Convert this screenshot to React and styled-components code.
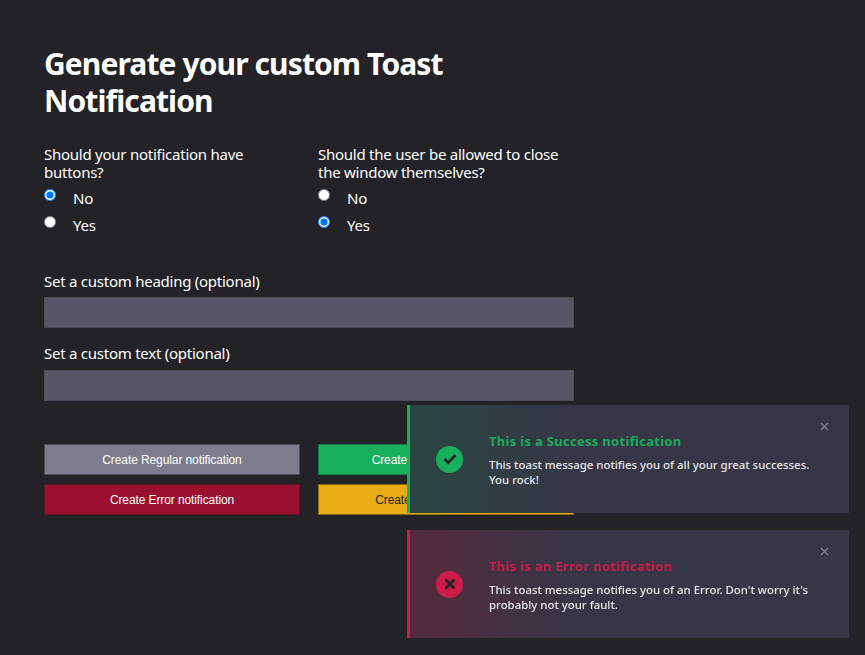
import React from "react";
import styled, { createGlobalStyle } from "styled-components";

const Global = createGlobalStyle`
  html, body { margin: 0; padding: 0; background: #222227; }
  body { font-family: "Noto Sans", "Open Sans", sans-serif; color: #fff; }
  * { box-sizing: border-box; }
`;
const Page = styled.main`
  width: 530px; margin-left: 44px; padding-top: 46px; height: 655px; overflow: hidden;
`;
const Title = styled.h1`
  margin: 0 0 26px; font-size: 30px; line-height: 36.5px; font-weight: 700; color: #fff; letter-spacing: -.9px;
`;
const Columns = styled.div`
  display: grid; grid-template-columns: 256px 256px; column-gap: 18px;
`;
const Group = styled.fieldset`
  border: 0; margin: 0; padding: 0; min-width: 0;
`;
const Question = styled.legend`
  padding: 0; margin: 0 0 2px; font-size: 15px; line-height: 18px; letter-spacing: -.25px; display: block;
`;
const Option = styled.label`
  display: flex; height: 27px; align-items: flex-start; font-size: 15px; line-height: 31px; letter-spacing: -.25px;
`;
const Radio = styled.input`
  width: 12px; height: 12px; margin: 6px 17px 0 0; flex: none;
`;
const Field = styled.div`
  display: flex; flex-direction: column; margin-top: ${p => p.$top}px;
`;
const FieldLabel = styled.label`
  font-size: 15px; line-height: 18px; letter-spacing: -.25px; margin-bottom: ${p => p.$gap}px;
`;
const Input = styled.input`
  height: 31px; width: 100%; background: #565666; border: 1px solid #4b4b59; color: #fff;
`;
const Buttons = styled.div`
  display: grid; grid-template-columns: 256px 256px; gap: 9px 18px; margin-top: 43px;
`;
const Button = styled.button`
  height: 31px; border: 1px solid ${p => p.$edge}; background: ${p => p.$bg}; color: ${p => p.$fg};
  font-family: "Liberation Sans", Arial, sans-serif; font-size: 12px; letter-spacing: -.1px;
  padding: 0 ${p => p.$padRight || 0}px 0 0;
`;
const ToastStack = styled.div`
  position: fixed; left: 407px; top: 405px; width: 442px; display: flex; flex-direction: column; gap: 17px;
`;
const Toast = styled.div`
  height: 108px; border-left: 3px solid ${p => p.$color}; background: linear-gradient(90deg, ${p => p.$tint} 0%, #363646 37%);
  display: flex; align-items: center; padding: 0 36px 0 26px; position: relative;
`;
const IconCircle = styled.div`
  width: 27px; height: 27px; border-radius: 50%; background: ${p => p.$color}; flex: none; display: flex; align-items: center; justify-content: center;
`;
const Body = styled.div`
  margin-left: 26px; margin-top: 1px;
`;
const ToastTitle = styled.div`
  color: ${p => p.$color}; font-size: 13px; line-height: 18px; font-weight: 700; letter-spacing: .3px; margin-bottom: 7px;
`;
const ToastText = styled.div`
  color: #e6e6ea; font-size: 11.4px; line-height: 15px; font-weight: 500;
`;
const Close = styled.svg`
  position: absolute; top: 17px; right: 20px; width: 9px; height: 9px;
`;

const Choice = ({ name, question, checked }) => (
  <Group>
    <Question>{question}</Question>
    {["No", "Yes"].map(v => (
      <Option key={v}><Radio type="radio" name={name} defaultChecked={checked === v} />{v}</Option>
    ))}
  </Group>
);

const X = () => (
  <Close viewBox="0 0 9 9"><path d="M1 1l7 7M8 1l-7 7" stroke="#85858f" strokeWidth="1.1" fill="none" /></Close>
);

export default function App() {
  return (
    <>
      <Global />
      <Page>
        <Title>Generate your custom Toast Notification</Title>
        <Columns>
          <Choice name="buttons" question="Should your notification have buttons?" checked="No" />
          <Choice name="close" question="Should the user be allowed to close the window themselves?" checked="Yes" />
        </Columns>
        <Field $top={35}>
          <FieldLabel $gap={7}>Set a custom heading (optional)</FieldLabel>
          <Input />
        </Field>
        <Field $top={16}>
          <FieldLabel $gap={8}>Set a custom text (optional)</FieldLabel>
          <Input />
        </Field>
        <Buttons>
          <Button $bg="#7c7c8c" $edge="#4e4e5a" $fg="#fff">Create Regular notification</Button>
          <Button $bg="#17ae5c" $edge="#12804a" $fg="#fff" $padRight={6}>Create Success notification</Button>
          <Button $bg="#9b102f" $edge="#5e1426" $fg="#fff">Create Error notification</Button>
          <Button $bg="#e8ad14" $edge="#8a6a16" $fg="#222">Create Warning notification</Button>
        </Buttons>
      </Page>
      <ToastStack>
        <Toast $color="#17ae5c" $tint="#2a4642">
          <IconCircle $color="#17ae5c">
            <svg width="14" height="12" viewBox="0 0 14 12"><path d="M1.5 6l3.7 3.7 7.3-7.7" stroke="#222227" strokeWidth="2.6" fill="none" /></svg>
          </IconCircle>
          <Body>
            <ToastTitle $color="#17ae5c">This is a Success notification</ToastTitle>
            <ToastText>This toast message notifies you of all your great successes. You rock!</ToastText>
          </Body>
          <X />
        </Toast>
        <Toast $color="#cc1c48" $tint="#552a3c">
          <IconCircle $color="#cc1c48">
            <svg width="12" height="12" viewBox="0 0 12 12"><path d="M1.5 1.5l9 9M10.5 1.5l-9 9" stroke="#222227" strokeWidth="2.8" fill="none" /></svg>
          </IconCircle>
          <Body>
            <ToastTitle $color="#cc1c48">This is an Error notification</ToastTitle>
            <ToastText>This toast message notifies you of an Error. Don't worry it's probably not your fault.</ToastText>
          </Body>
          <X />
        </Toast>
      </ToastStack>
    </>
  );
}
